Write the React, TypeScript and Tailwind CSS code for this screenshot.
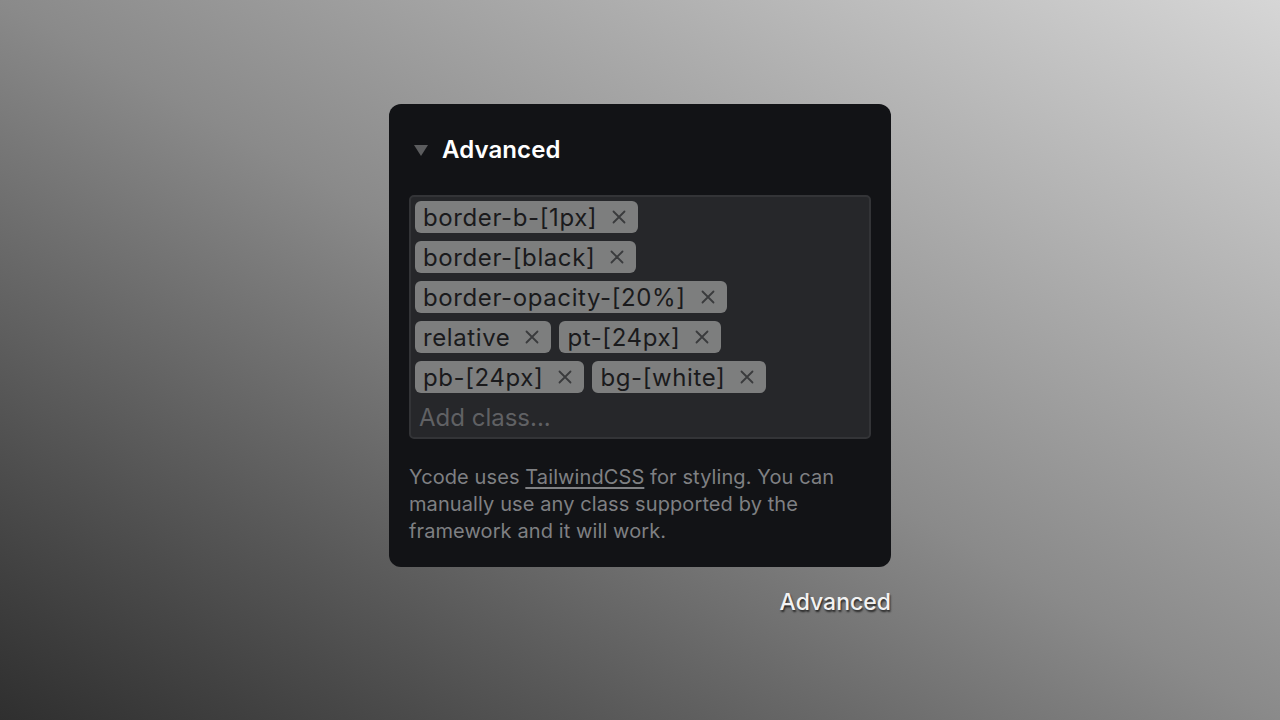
import { useState } from "react";

const INITIAL_CLASSES = [
  "border-b-[1px]",
  "border-[black]",
  "border-opacity-[20%]",
  "relative",
  "pt-[24px]",
  "pb-[24px]",
  "bg-[white]",
];

function CloseIcon() {
  return (
    <svg width="14" height="14" viewBox="0 0 14 14" fill="none" className="shrink-0">
      <path d="M1.5 1.5L12.5 12.5M12.5 1.5L1.5 12.5" stroke="#3a3b3d" strokeWidth="1.8" strokeLinecap="round" />
    </svg>
  );
}

export default function App() {
  const [classes, setClasses] = useState(INITIAL_CLASSES);

  return (
    <div
      className="min-h-screen w-full bg-linear-to-tr from-[#2f2f2f] via-[#8a8a8a] to-[#d6d6d6] flex flex-col items-center pt-[104px]"
      style={{ fontFamily: "Inter, 'Noto Sans', sans-serif" }}
    >
      <div className="w-[502px] rounded-[12px] bg-[#121316] pt-[24px] pb-[22px] px-[20px]">
        <div className="flex items-center h-[44px] gap-[13px]">
          <svg width="16" height="12" viewBox="0 0 16 12" className="ml-[4px]">
            <path d="M1 1H15L8 12Z" fill="#5b5c5e" />
          </svg>
          <span className="text-[24px] font-semibold text-white tracking-[0.1px]">Advanced</span>
        </div>

        <div className="mt-[23px] rounded-[5px] border-2 border-[#333437] bg-[#26272a] p-[4px]">
          <div className="flex flex-wrap gap-[8px]">
            {classes.map((c) => (
              <div
                key={c}
                className="h-[32px] flex items-center gap-[15px] rounded-[6px] bg-[#7d7e7e] pl-[8px] pr-[12px]"
              >
                <span className="mt-[2px] text-[24px] leading-none text-[#1a1a1c] tracking-[0.6px]">{c}</span>
                <button onClick={() => setClasses(classes.filter((x) => x !== c))}>
                  <CloseIcon />
                </button>
              </div>
            ))}
          </div>
          <input
            placeholder="Add class..."
            className="mt-[8px] h-[32px] w-full bg-transparent px-[4px] pt-[2px] text-[24px] text-[#ccc] placeholder:text-[#606164] outline-none"
          />
        </div>

        <p className="mt-[25px] text-[20px] leading-[27px] text-[#7f8083] tracking-[0.1px]">
          Ycode uses{" "}
          <a href="#" className="underline underline-offset-[3px]">
            TailwindCSS
          </a>{" "}
          for styling. You can manually use any class supported by the framework and it will work.
        </p>
      </div>

      <div className="w-[502px] flex justify-end mt-[18px]">
        <span
          className="text-[23px] font-medium text-[#f2f2f2]"
          style={{ textShadow: "1px 2px 2px rgba(0,0,0,0.7)" }}
        >
          Advanced
        </span>
      </div>
    </div>
  );
}
